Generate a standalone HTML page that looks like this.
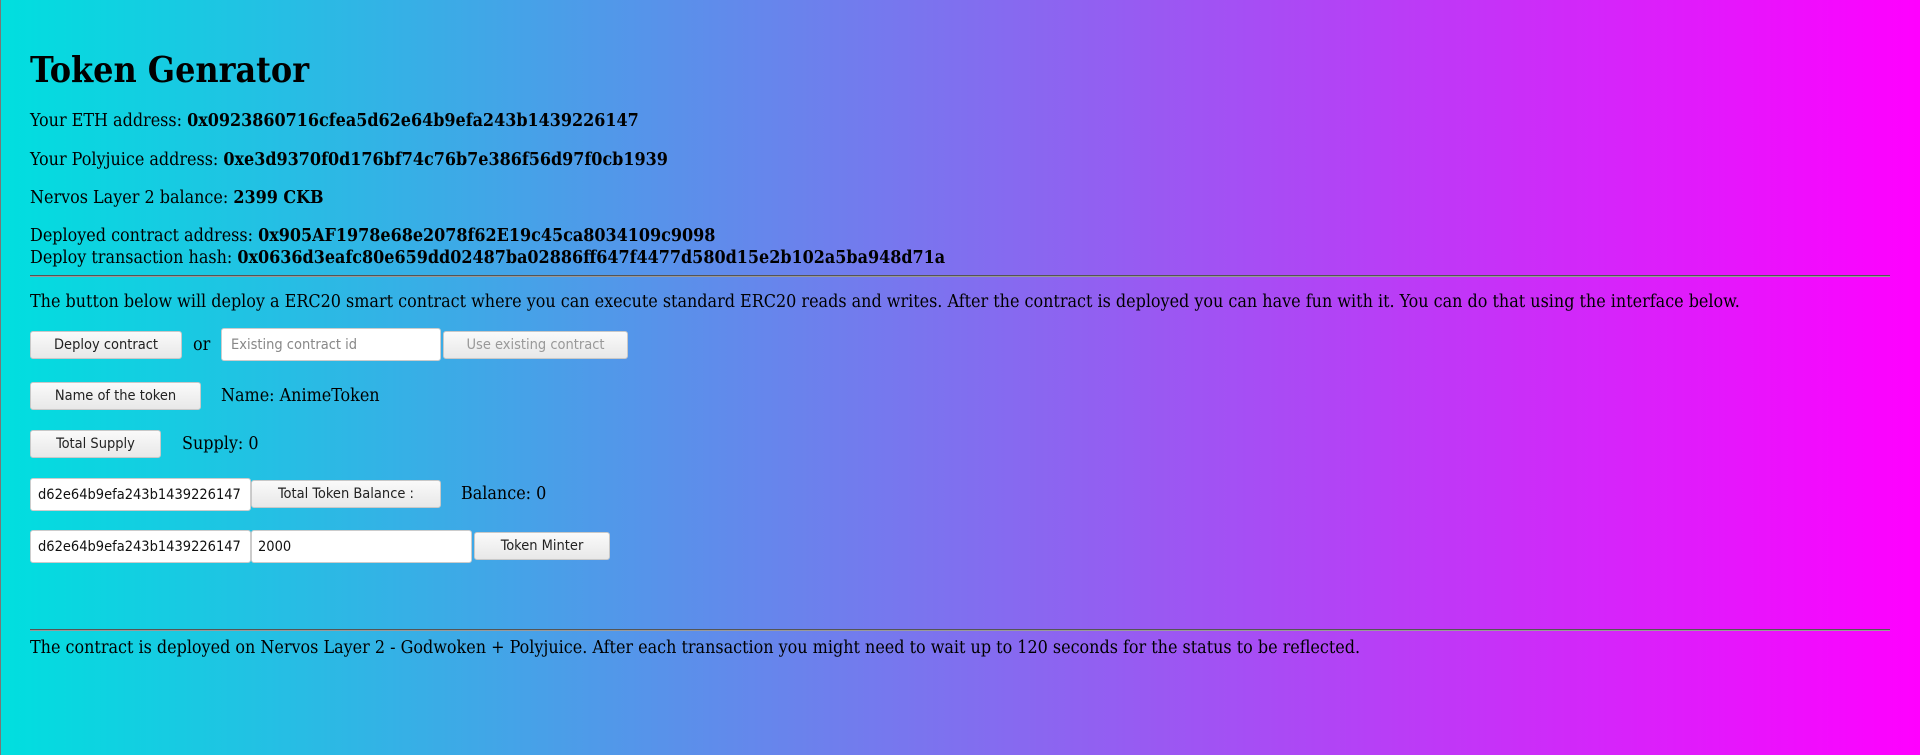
<!DOCTYPE html>
<html><head><meta charset="utf-8"><style>
html,body{margin:0;padding:0;width:1920px;height:755px;overflow:hidden}
body{background:linear-gradient(to right,#00dfdf,#ff00ff);border-left:1px solid #777;box-sizing:border-box;position:relative;font-family:"DejaVu Serif Condensed","DejaVu Serif","Liberation Serif",serif;font-stretch:condensed;font-size:17.8px;color:#000}
.a{position:absolute;white-space:nowrap;line-height:22px}
h1{position:absolute;margin:0;left:29px;top:51px;font-size:35.5px;line-height:40px;font-weight:bold}
.hr{position:absolute;left:29px;width:1860px;height:0;border-top:1px solid #555;border-bottom:1px solid #999}
.btn,.inp{position:absolute;box-sizing:border-box;font-family:"DejaVu Sans Condensed","DejaVu Sans","Liberation Sans",sans-serif;font-stretch:condensed;font-size:14.5px;display:flex;align-items:center}
.btn{background:linear-gradient(#fafafa,#e8e8e8);border:1px solid #c8c8c8;border-radius:3px;justify-content:center;color:#222}
.inp{background:#fff;border:1px solid #ccc;border-radius:3px;padding-left:9px;color:#111}
</style></head><body>
<h1>Token Genrator</h1>
<div class="a" style="left:29px;top:110px">Your ETH address: <b>0x0923860716cfea5d62e64b9efa243b1439226147</b></div>
<div class="a" style="left:29px;top:149px">Your Polyjuice address: <b>0xe3d9370f0d176bf74c76b7e386f56d97f0cb1939</b></div>
<div class="a" style="left:29px;top:187px">Nervos Layer 2 balance: <b>2399 CKB</b></div>
<div class="a" style="left:29px;top:225px">Deployed contract address: <b>0x905AF1978e68e2078f62E19c45ca8034109c9098</b></div>
<div class="a" style="left:29px;top:247px">Deploy transaction hash: <b>0x0636d3eafc80e659dd02487ba02886ff647f4477d580d15e2b102a5ba948d71a</b></div>
<div class="hr" style="top:275px"></div>
<div class="a" style="left:29px;top:291px">The button below will deploy a ERC20 smart contract where you can execute standard ERC20 reads and writes. After the contract is deployed you can have fun with it. You can do that using the interface below.</div>
<div class="btn" style="left:29px;top:331px;width:152px;height:28px">Deploy contract</div>
<div class="a" style="left:192px;top:334px">or</div>
<div class="inp" style="left:220px;top:328px;width:220px;height:33px;color:#888">Existing contract id</div>
<div class="btn" style="left:442px;top:331px;width:185px;height:28px;color:#999">Use existing contract</div>
<div class="btn" style="left:29px;top:382px;width:171px;height:28px">Name of the token</div>
<div class="a" style="left:220px;top:385px">Name: AnimeToken</div>
<div class="btn" style="left:29px;top:430px;width:131px;height:28px">Total Supply</div>
<div class="a" style="left:181px;top:433px">Supply: 0</div>
<div class="inp" style="left:29px;top:478px;width:221px;height:33px;padding-left:7px">d62e64b9efa243b1439226147</div>
<div class="btn" style="left:250px;top:480px;width:190px;height:28px">Total Token Balance :</div>
<div class="a" style="left:460px;top:483px">Balance: 0</div>
<div class="inp" style="left:29px;top:530px;width:221px;height:33px;padding-left:7px">d62e64b9efa243b1439226147</div>
<div class="inp" style="left:250px;top:530px;width:221px;height:33px;padding-left:6px">2000</div>
<div class="btn" style="left:473px;top:532px;width:136px;height:28px">Token Minter</div>
<div class="hr" style="top:629px"></div>
<div class="a" style="left:29px;top:637px">The contract is deployed on Nervos Layer 2 - Godwoken + Polyjuice. After each transaction you might need to wait up to 120 seconds for the status to be reflected.</div>
</body></html>
